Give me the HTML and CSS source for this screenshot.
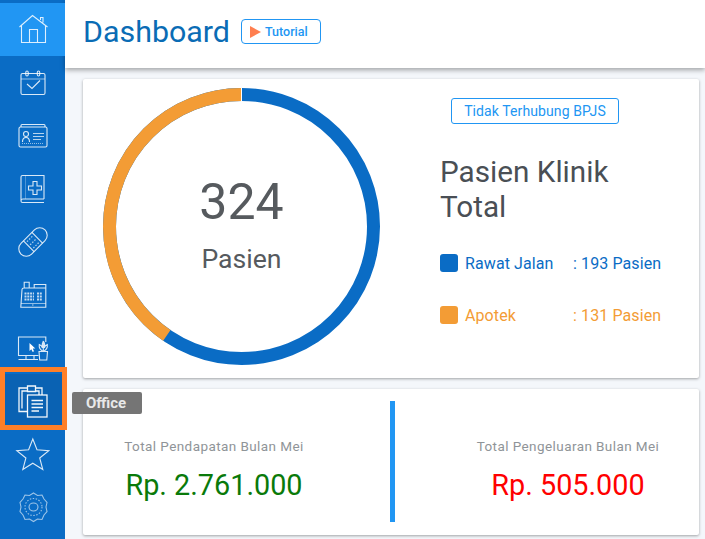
FILE: index.html
```html
<!DOCTYPE html>
<html lang="id">
<head>
    <meta charset="UTF-8">
    <title>Dashboard</title>
    <link rel="stylesheet" href="styles.css">
</head>
<body>

    <!-- Sidebar -->
    <aside class="sidebar">
        <a class="side-item active" href="#">
            <svg viewBox="0 0 36 36"><path d="M4.500 15 17.500 3.500 32.500 15M6.500 13.500V30.500H30.500V13.500M14.500 30.500V17.500H22.500V30.500M25.500 8V5.500H28V10.500"/></svg>
        </a>
        <a class="side-item" href="#">
            <svg viewBox="0 0 36 36"><rect x="6" y="8.500" width="24" height="21" rx="1.500"/><path class="thin" d="M6 14H30"/><path d="M12 19 17 23.500 25 15.500"/><rect x="10.800" y="6" width="2.400" height="5" rx="1.200"/><rect x="22.300" y="6" width="2.400" height="5" rx="1.200"/></svg>
        </a>
        <a class="side-item" href="#">
            <svg viewBox="0 0 36 36"><path d="M6 9V7.500Q6 6.500 7 6.500H29Q30 6.500 30 7.500V9"/><rect x="4" y="9" width="28" height="20" rx="1.500"/><circle cx="11" cy="16" r="2.500"/><path d="M7.500 24Q7.500 19.500 11 19.500T14.500 24"/><path class="lines" d="M18 15.500H29M18 18.500H29M18 21.500H26"/><path class="thin" d="M7 25.500H29" stroke-dasharray="1 1"/></svg>
        </a>
        <a class="side-item" href="#">
            <svg viewBox="0 0 36 36"><path d="M29 28V4.500H7.500Q6 4.500 6 6V30Q6 31.500 7.500 31.500H29M6 30Q6 28 8 28H29"/><path class="thin" d="M10.500 4.500V28" stroke-dasharray="1 1"/><path d="M18 10.500H22V15H26.500V19H22V23.500H18V19H13.500V15H18Z"/></svg>
        </a>
        <a class="side-item" href="#">
            <svg viewBox="0 0 36 36"><g transform="rotate(-45 18 18)"><rect x="1" y="10.500" width="34" height="15" rx="7.500"/><path d="M12 10.500V25.500M24 10.500V25.500"/><path class="lines" d="M14 13.500H22M14 18H22M14 22.500H22" stroke-dasharray="1.500 1.500"/></g></svg>
        </a>
        <a class="side-item" href="#">
            <svg viewBox="0 0 36 36"><path d="M5.800 30.200 7 12.500Q7 11 9 11H30.800V30.200ZM5.800 30.200H30.800M9.200 11V5.200H14.200V11M19.200 11V7.500H30.800V11"/><path class="thin" d="M6 26.500H30.800"/><path class="keys" d="M9.500 16.500H19M9.500 19.500H19M9.500 22.500H19M22 16.500H27M22 19.500H27M22 22.500H27"/><path class="lines" d="M17 28H18.500"/></svg>
        </a>
        <a class="side-item" href="#">
            <svg viewBox="0 0 36 36"><path d="M30.800 12V7H3.500V25.500H23.500M3.500 29.500H23M11 25.500V29.500M19 25.500V29.500"/><path class="fill" d="M14.500 13V21L16.300 19.300 17.700 22 19 21.300 17.800 18.600H20.300Z"/><path d="M24 21.500H32.500L31.800 30H24.700ZM28.300 21.500V11M28.300 21.500Q23.500 19 24.300 14.500 26.800 15.500 27.500 18M28.300 11Q26.500 14 27.500 18M28.300 11Q30.500 14 29.200 18M29.200 18Q30 15.500 32.300 14.500 33 19 28.300 21.500"/></svg>
        </a>
        <a class="side-item office" href="#">
            <svg viewBox="0 0 36 36"><path d="M12.500 28.500H4V5H12.500M20.500 5H27V12M7 25.500V8H12.500M20.500 8H24V12M12.500 3H20.500V8.500H12.500Z"/><rect x="12.500" y="12" width="19.500" height="22"/><path d="M16.500 17.500H28M16.500 21H28M16.500 24.500H28M16.500 28H24"/></svg>
            <span class="tooltip">Office</span>
        </a>
        <a class="side-item" href="#">
            <svg viewBox="0 0 36 36"><path d="M17.800 3 22 13.800 33.800 14.600 24.700 22 27.800 33.500 17.800 27.200 7.800 33.500 10.900 22 1.800 14.600 13.600 13.800Z"/></svg>
        </a>
        <a class="side-item faded" href="#">
            <svg viewBox="0 0 36 36"><path d="M18.500 4 22.500 6.500 27 6 29 10 32 13.500 31 18 32 22.500 29 26 27 30.500 22.500 30 18.500 32.500 14.500 30 10 30.500 8 26 5 22.500 6 18 5 13.500 8 10 10 6 14.500 6.500Z"/><circle cx="18.500" cy="18" r="8.500" stroke-dasharray="1.500 1.500"/><ellipse cx="18.500" cy="18" rx="4.500" ry="4"/></svg>
        </a>
    </aside>

    <div class="main">
        <!-- Header -->
        <header>
            <h1>Dashboard</h1>
            <a class="btn-tutorial" href="#"><span class="play"></span>Tutorial</a>
        </header>

        <div class="content">
            <!-- Pasien -->
            <section class="card pasien">
                <div class="donut">
                    <svg viewBox="0 0 277 277">
                        <circle class="ring-blue" cx="138.500" cy="138.500" r="132" pathLength="324"/>
                        <circle class="ring-orange" cx="138.500" cy="138.500" r="132" pathLength="324" stroke-dasharray="131 193" transform="rotate(-90 138.500 138.500) scale(1 -1) translate(0 -277)"/>
                        <path class="ring-gap" d="M138.500 0V14"/>
                    </svg>
                    <div class="donut-label">
                        <div class="jumlah">324</div>
                        <div class="satuan">Pasien</div>
                    </div>
                </div>
                <div class="info">
                    <a class="btn-bpjs" href="#">Tidak Terhubung BPJS</a>
                    <h2>Pasien Klinik<br>Total</h2>
                    <div class="legend blue"><span class="dot"></span><span class="nama">Rawat Jalan</span><span>: 193 Pasien</span></div>
                    <div class="legend orange"><span class="dot"></span><span class="nama">Apotek</span><span>: 131 Pasien</span></div>
                </div>
            </section>

            <!-- Total bulan ini -->
            <section class="card totals">
                <div class="total-box">
                    <p>Total Pendapatan Bulan Mei</p>
                    <div class="nilai green">Rp. 2.761.000</div>
                </div>
                <div class="divider"></div>
                <div class="total-box">
                    <p>Total Pengeluaran Bulan Mei</p>
                    <div class="nilai red">Rp. 505.000</div>
                </div>
            </section>
        </div>
    </div>

</body>
</html>
```

FILE: styles.css
```css
/* General */
html, body {
    height: 539px;
    overflow: hidden;
}

body {
    display: flex;
    margin: 0;
    font-family: Roboto, Arial, sans-serif;
    background-color: #f4f7fb;
}

/* Sidebar */
.sidebar {
    flex: 0 0 65px;
    height: 539px;
    padding-top: 3px;
    box-sizing: border-box;
    background-color: #0a6cc5;
}

.side-item {
    position: relative;
    display: flex;
    align-items: center;
    justify-content: center;
    height: 53px;
}

.side-item.active {
    background-color: #2196f3;
}

.side-item svg {
    width: 36px;
    height: 36px;
    fill: none;
    stroke: #fff;
    stroke-width: 1.1;
    stroke-opacity: 0.85;
}

.side-item .thin {
    stroke-width: 0.8;
    stroke-opacity: 0.7;
}

.side-item .lines {
    stroke-width: 1.2;
    stroke-opacity: 0.7;
}

.side-item .keys {
    stroke-width: 2;
    stroke-opacity: 0.75;
    stroke-dasharray: 2 0.8;
}

.side-item .fill {
    fill: #fff;
    stroke: none;
}

.side-item.faded svg {
    stroke-opacity: 0.6;
}

.side-item.office {
    background-color: #0a62b3;
}

.side-item.office svg {
    stroke-width: 1.3;
    stroke-opacity: 0.95;
}

.side-item.office::after {
    content: "";
    position: absolute;
    top: -7px;
    right: -2px;
    bottom: -3px;
    left: 0;
    border: 5px solid #ff7f27;
}

.tooltip {
    position: absolute;
    top: 18px;
    left: 72px;
    z-index: 5;
    width: 70px;
    height: 22px;
    padding-right: 2px;
    box-sizing: border-box;
    border-radius: 2px;
    background-color: #757575;
    color: #e8e8e8;
    font-size: 15px;
    font-weight: 700;
    line-height: 22px;
    text-align: center;
    text-decoration: none;
}

/* Header */
.main {
    flex: 1;
    min-width: 0;
}

header {
    display: flex;
    align-items: center;
    gap: 11px;
    height: 68px;
    padding: 0 18px;
    box-sizing: border-box;
    background-color: #fff;
    box-shadow: 0 2px 5px rgba(0, 0, 0, 0.35);
}

h1 {
    margin: 0 0 5px;
    color: #0a6cb5;
    font-size: 30.4px;
    font-weight: 400;
}

.btn-tutorial {
    display: flex;
    align-items: center;
    gap: 4px;
    width: 80px;
    height: 25px;
    margin-bottom: 5px;
    padding-left: 8px;
    box-sizing: border-box;
    border: 1px solid #2196f3;
    border-radius: 4px;
    color: #2196f3;
    font-size: 12.5px;
    font-weight: 500;
    text-decoration: none;
}

.play {
    border-top: 6px solid transparent;
    border-bottom: 6px solid transparent;
    border-left: 11px solid #ff7f50;
}

/* Cards */
.content {
    display: flex;
    flex-direction: column;
    gap: 11px;
    padding: 11px 6px 0 18px;
}

.card {
    display: flex;
    background-color: #fff;
    box-shadow: 0 1px 3px rgba(0, 0, 0, 0.35);
    border-radius: 2px;
}

.pasien {
    height: 299px;
    padding: 9px 0 0 20px;
    box-sizing: border-box;
}

.donut {
    display: grid;
    width: 277px;
    height: 277px;
}

.donut svg, .donut-label {
    grid-area: 1 / 1;
}

.donut svg {
    width: 277px;
    height: 277px;
    fill: none;
}

.ring-blue {
    stroke: #0a6cc5;
    stroke-width: 13;
}

.ring-orange {
    stroke: #f39c35;
    stroke-width: 13;
}

.ring-gap {
    stroke: #fff;
    stroke-width: 1;
}

.donut-label {
    align-self: center;
    margin-top: -6px;
    color: #565a5e;
    text-align: center;
}

.jumlah {
    font-size: 50px;
    line-height: 58px;
}

.satuan {
    margin-top: 13px;
    font-size: 26.6px;
    line-height: 30px;
}

.info {
    display: flex;
    flex-direction: column;
    align-items: flex-start;
    margin-left: 60px;
}

.btn-bpjs {
    width: 168px;
    height: 26px;
    margin: 10px 0 0 11px;
    box-sizing: border-box;
    border: 1px solid #2196f3;
    border-radius: 3px;
    color: #2196f3;
    font-size: 14px;
    letter-spacing: 0.1px;
    line-height: 24px;
    text-align: center;
    text-decoration: none;
}

h2 {
    margin: 30px 0 0;
    color: #4a4f55;
    font-size: 29.7px;
    font-weight: 400;
    line-height: 35px;
}

.legend {
    display: flex;
    align-items: center;
    height: 18px;
    font-size: 16px;
    letter-spacing: 0.1px;
}

.legend.blue {
    margin-top: 30px;
    color: #0a6cc5;
}

.legend.orange {
    margin-top: 34px;
    color: #f39c35;
}

.dot {
    flex: 0 0 18px;
    height: 18px;
    margin-right: 7px;
    border-radius: 3px;
    background-color: currentColor;
}

.nama {
    width: 108px;
}

/* Totals */
.totals {
    justify-content: space-between;
    height: 146px;
    padding-top: 12px;
    box-sizing: border-box;
}

.total-box {
    width: 262px;
    text-align: center;
}

.total-box p {
    margin: 37px 0 0;
    color: #8f9498;
    font-size: 13.5px;
    letter-spacing: 0.42px;
}

.nilai {
    margin-top: 14px;
    font-size: 28.8px;
}

.green {
    color: #0a7a0a;
}

.red {
    color: #f00;
}

.divider {
    flex: 0 0 5px;
    height: 121px;
    margin-left: 3px;
    background-color: #2196f3;
}
```
